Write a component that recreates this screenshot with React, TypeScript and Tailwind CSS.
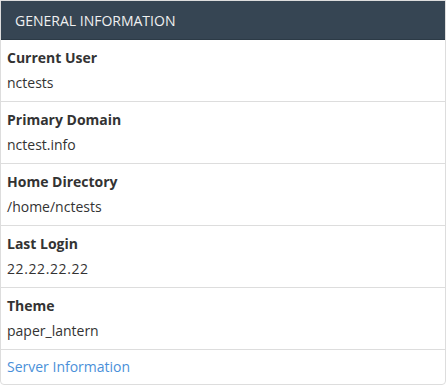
const rows = [
  { label: "Current User", value: "nctests" },
  { label: "Primary Domain", value: "nctest.info" },
  { label: "Home Directory", value: "/home/nctests" },
  { label: "Last Login", value: "22.22.22.22", wide: true },
  { label: "Theme", value: "paper_lantern" },
];

export default function App() {
  return (
    <div className="w-[446px] bg-white text-[14px] text-[#333] [font-family:'Open_Sans',sans-serif]">
      <div className="overflow-hidden rounded-b-[4px] border border-[#dddddd]">
        <div className="-mx-px -mt-px flex h-[40px] items-center border border-[#2c3a46] bg-[#364553] px-[14px] text-[14px] uppercase text-[#f0f0f0]">
          General Information
        </div>
        {rows.map((r) => (
          <div key={r.label} className="border-b border-[#dddddd] px-[6px] pt-[8px] pb-[8px]">
            <div className="h-[20px] leading-[20px] font-bold">{r.label}</div>
            <div className={`mt-[5px] h-[20px] leading-[20px] ${r.wide ? "tracking-[0.6px]" : ""}`}>{r.value}</div>
          </div>
        ))}
        <div className="px-[6px] py-[7px] leading-[20px]">
          <a href="#" className="text-[#4a90d9]">
            Server Information
          </a>
        </div>
      </div>
    </div>
  );
}
